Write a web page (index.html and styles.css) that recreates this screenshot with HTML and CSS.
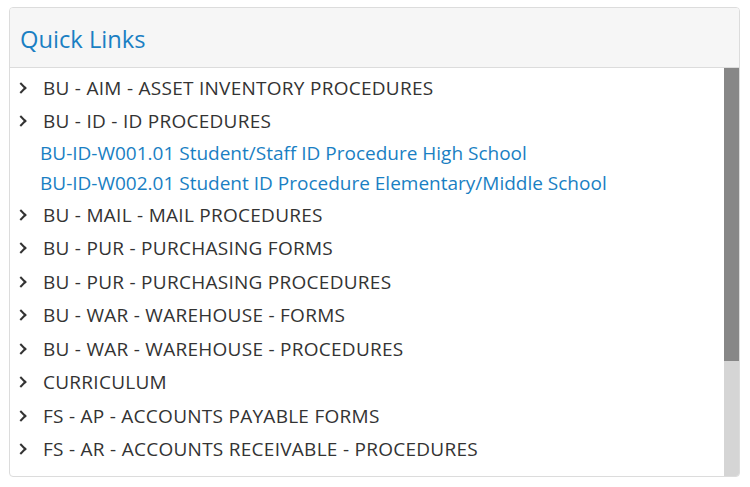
FILE: index.html
```html
<!DOCTYPE html>
<html lang="en">
<head>
    <meta charset="UTF-8">
    <title>Quick Links</title>
    <link rel="stylesheet" href="styles.css">
</head>
<body>
    <div class="panel">
        <div class="panel-header">
            <h2>Quick Links</h2>
        </div>
        <div class="panel-body">
            <ul class="tree">
                <li class="folder"><span class="chev"></span>BU - AIM - ASSET INVENTORY PROCEDURES</li>
                <li class="folder"><span class="chev"></span>BU - ID - ID PROCEDURES</li>
                <li class="doc"><a href="#">BU-ID-W001.01 Student/Staff ID Procedure High School</a></li>
                <li class="doc"><a href="#">BU-ID-W002.01 Student ID Procedure Elementary/Middle School</a></li>
                <li class="folder"><span class="chev"></span>BU - MAIL - MAIL PROCEDURES</li>
                <li class="folder"><span class="chev"></span>BU - PUR - PURCHASING FORMS</li>
                <li class="folder"><span class="chev"></span>BU - PUR - PURCHASING PROCEDURES</li>
                <li class="folder"><span class="chev"></span>BU - WAR - WAREHOUSE - FORMS</li>
                <li class="folder"><span class="chev"></span>BU - WAR - WAREHOUSE - PROCEDURES</li>
                <li class="folder"><span class="chev"></span>CURRICULUM</li>
                <li class="folder"><span class="chev"></span>FS - AP - ACCOUNTS PAYABLE FORMS</li>
                <li class="folder"><span class="chev"></span>FS - AR - ACCOUNTS RECEIVABLE - PROCEDURES</li>
            </ul>
            <div class="scrollbar">
                <div class="thumb"></div>
            </div>
        </div>
    </div>
</body>
</html>
```

FILE: styles.css
```css
* {
    margin: 0;
    padding: 0;
    box-sizing: border-box;
}

body {
    background: #fff;
    font-family: "Open Sans", "Noto Sans", sans-serif;
    padding: 7px 10px 10px 9px;
}

.panel {
    width: 731px;
    height: 470px;
    border: 1px solid #dcdcdc;
    border-radius: 4px;
    overflow: hidden;
    display: flex;
    flex-direction: column;
}

.panel-header {
    height: 60px;
    background: #f6f6f6;
    border-bottom: 1px solid #dcdcdc;
    display: flex;
    align-items: center;
    padding: 2px 10px 0;
}

.panel-header h2 {
    font-weight: 400;
    font-size: 23.7px;
    color: #1a7fc3;
}

.panel-body {
    flex: 1;
    display: flex;
    min-height: 0;
}

.tree {
    flex: 1;
    list-style: none;
    padding-top: 3px;
    overflow: hidden;
}

.scrollbar {
    width: 15px;
    background: #d5d5d5;
}

.thumb {
    height: 293px;
    background: #878787;
}

.tree li {
    font-size: 19px;
    color: #333;
    white-space: nowrap;
}

.folder {
    height: 33.5px;
    display: flex;
    align-items: center;
    padding-left: 7px;
    letter-spacing: 0.27px;
}

.chev {
    width: 8px;
    height: 8px;
    border-right: 2px solid #333;
    border-top: 2px solid #333;
    transform: rotate(45deg);
    margin-right: 18px;
}

.doc {
    height: 30px;
    display: flex;
    align-items: center;
    padding-left: 30px;
}

.doc a {
    color: #1a7fc3;
    text-decoration: none;
}
```
